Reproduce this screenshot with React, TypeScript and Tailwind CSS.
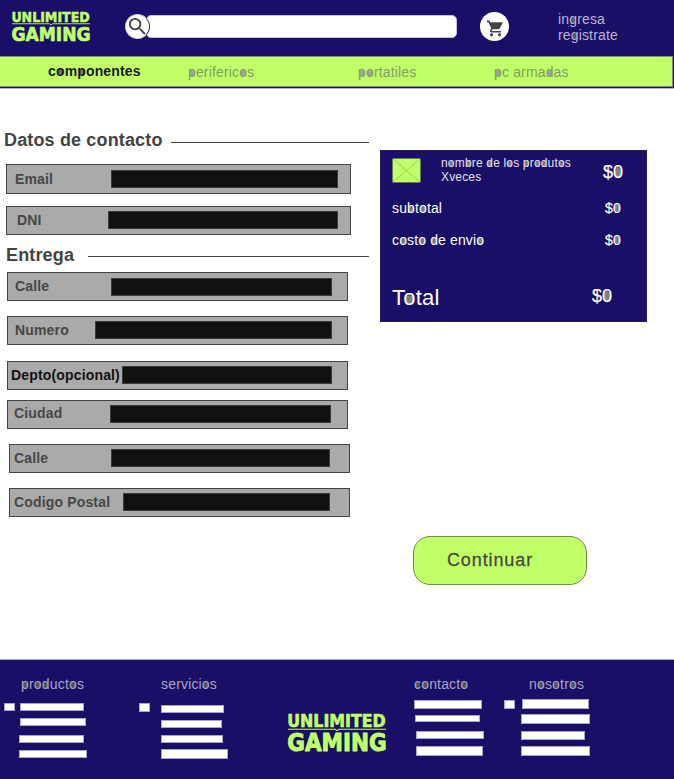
import React from "react";

/* Letters wrapped in [ ] get a softly filled counter. */
function Ink({ text, fill }: { text: string; fill: string }) {
  return (
    <>
      {text.split(/(\[[a-z0]\])/).map((part, i) =>
        part.startsWith("[") ? (
          <span key={i} className={fill}>{part[1]}</span>
        ) : (
          part
        )
      )}
    </>
  );
}

const DARK = "bg-[radial-gradient(ellipse_2.4px_3.4px_at_50%_57%,#555_75%,transparent_100%)]";
const GREY = "bg-[radial-gradient(ellipse_2.4px_3.4px_at_50%_57%,#777_75%,transparent_100%)]";
const PALE = "bg-[radial-gradient(ellipse_2.4px_3.4px_at_50%_57%,#a3a3a3_75%,transparent_100%)]";
const ZERO = "bg-[radial-gradient(ellipse_2px_4px_at_50%_50%,#808080_80%,transparent_100%)]";
const ZERO_BIG = "bg-[radial-gradient(ellipse_2.8px_5.5px_at_50%_50%,#808080_80%,transparent_100%)]";
const BIG = "bg-[radial-gradient(ellipse_4px_5px_at_50%_60%,#808080_85%,transparent_100%)]";

function Logo({ className }: { className: string }) {
  return (
    <svg viewBox="0 0 98 40" preserveAspectRatio="none" className={`overflow-visible ${className}`} fill="#c1ff68" stroke="#c1ff68">
      <g fontFamily="'DejaVu Sans Condensed', 'DejaVu Sans', sans-serif" fontWeight="700" strokeLinejoin="round">
        <text x="-0.8" y="14.7" fontSize="18.4" strokeWidth="0.6" textLength="98.5" lengthAdjust="spacingAndGlyphs">UNLIMITED</text>
        <text x="-0.8" y="38.7" fontSize="25.2" strokeWidth="0.9" textLength="99.5" lengthAdjust="spacingAndGlyphs">GAMING</text>
      </g>
      <path d="M0 17.200H47L49 18.600L51 17.200H98" fill="none" strokeWidth="1.1" />
    </svg>
  );
}

const contact = [
  { label: "Email", row: "mt-[13px] ml-[6px] w-[345px] h-[30px]", text: "mt-[6px] pl-[8px] w-[104px] text-[#474747]", box: "mt-[5px] w-[227px]" },
  { label: "DNI", row: "mt-[12px] ml-[6px] w-[345px] h-[29px]", text: "mt-[5px] pl-[10px] w-[101px] text-[#474747]", box: "mt-[4px] w-[230px]" },
];

const delivery = [
  { label: "Calle", row: "mt-[6px] ml-[7px] w-[341px] h-[29px]", text: "mt-[5px] pl-[7px] w-[103px] text-[#474747]", box: "mt-[5px] w-[221px]" },
  { label: "Numero", row: "mt-[15px] ml-[7px] w-[341px] h-[29px]", text: "mt-[5px] pl-[7px] w-[87px] text-[#474747]", box: "mt-[4px] w-[237px]" },
  { label: "Depto(opcional)", row: "mt-[16px] ml-[7px] w-[341px] h-[29px]", text: "mt-[5px] pl-[3px] w-[114px] text-[#111]", box: "mt-[4px] w-[210px]" },
  { label: "Ciudad", row: "mt-[10px] ml-[7px] w-[341px] h-[29px]", text: "mt-[4px] pl-[6px] w-[102px] text-[#474747]", box: "mt-[4px] w-[221px]" },
  { label: "Calle", row: "mt-[15px] ml-[9px] w-[341px] h-[29px]", text: "mt-[5px] pl-[4px] w-[101px] text-[#474747]", box: "mt-[4px] w-[219px]" },
  { label: "Codigo Postal", row: "mt-[15px] ml-[9px] w-[341px] h-[29px]", text: "mt-[5px] pl-[4px] w-[113px] text-[#474747]", box: "mt-[4px] w-[207px]" },
];

function Field({ label, row, text, box }: { label: string; row: string; text: string; box: string }) {
  return (
    <div className={`flex items-start border border-[#444] bg-[#aaa] ${row}`}>
      <span className={`shrink-0 whitespace-nowrap text-[14px] leading-4 font-bold tracking-[0.16px] ${text}`}>{label}</span>
      <div className={`h-[18px] shrink-0 border border-[#3c3c3c] bg-[#111] ${box}`} />
    </div>
  );
}

const BAR = "shrink-0 border border-[#a9a4cc] bg-white";

function Bars({ items }: { items: string[] }) {
  return (
    <div className="flex flex-col items-start">
      {items.map((c, i) => (
        <div key={i} className={`${BAR} ${c}`} />
      ))}
    </div>
  );
}

const TITLE = "whitespace-nowrap text-[14px] leading-4 tracking-[0.17px] text-[#a9a4c8]";

export default function App() {
  return (
    <div className="flex h-[779px] w-[674px] flex-col overflow-hidden bg-white font-['Liberation_Sans',Arial,sans-serif]">
      <header className="flex h-[56px] shrink-0 items-start bg-[#190f66]">
        <Logo className="mt-[10px] ml-[12px] h-[32px] w-[78px] shrink-0" />
        <div className="relative z-10 mt-[14px] ml-[35px] flex size-[25px] shrink-0 items-center justify-center rounded-full border border-[#c9c7da] border-r-[#333] bg-white">
          <svg viewBox="0 0 24 24" className="size-[23px] shrink-0" fill="#444">
            <path d="M15.5 14h-.79l-.28-.27A6.471 6.471 0 0 0 16 9.5 6.500 6.500 0 1 0 9.500 16c1.610 0 3.090-.59 4.230-1.570l.27.280v.790l5 4.990L20.490 19l-4.990-5zm-6 0C7.010 14 5 11.990 5 9.500S7.010 5 9.500 5 14 7.010 14 9.500 11.990 14 9.500 14z" />
          </svg>
        </div>
        <div className="mt-[15px] -ml-[4px] h-[23px] w-[311px] shrink-0 rounded-[5px] border border-[#c3bfdf] bg-white" />
        <div className="mt-[12px] ml-[23px] flex size-[29px] shrink-0 items-center justify-center rounded-full bg-white">
          <svg viewBox="0 0 24 24" className="mt-[3px] ml-[1px] size-[19px]" fill="#444">
            <path d="M7 18c-1.100 0-1.990.9-1.990 2S5.900 22 7 22s2-.9 2-2-.9-2-2-2zM1 2v2h2l3.600 7.590-1.350 2.450c-.16.280-.25.610-.25.960 0 1.100.9 2 2 2h12v-2H7.420c-.14 0-.25-.11-.25-.25l.030-.120.900-1.630h7.450c.75 0 1.410-.41 1.750-1.030l3.580-6.490A1.003 1.003 0 0 0 20 4H5.210l-.94-2H1zm16 16c-1.100 0-1.990.9-1.990 2s.89 2 1.990 2 2-.9 2-2-.9-2-2-2z" />
          </svg>
        </div>
        <div className="mt-[11px] ml-[49px] text-[14px] leading-4 tracking-[0.15px] text-[#b9b5d2]">
          <p><Ink text="in[g]resa" fill={DARK} /></p>
          <p><Ink text="re[g]istrate" fill={DARK} /></p>
        </div>
      </header>

      <nav className="flex h-[33px] shrink-0 border-b border-[#b5b1d6] bg-[#190f66] pr-px pb-px text-[14px] leading-4 whitespace-nowrap">
        <div className="flex w-[673px] items-start border-t border-r border-b border-[#7e936d] bg-[#c1ff68] text-[#7f9d62]">
          <span className="mt-[6px] w-[188px] shrink-0 pl-[48px] font-bold tracking-[0.15px] text-[#171717]"><Ink text="c[o]m[p]onentes" fill={GREY} /></span>
          <span className="mt-[7px] w-[170px] shrink-0 tracking-[0.15px]"><Ink text="[p]eriferic[o]s" fill={PALE} /></span>
          <span className="mt-[7px] w-[136px] shrink-0 tracking-[0.15px]"><Ink text="[p][o]rtatiles" fill={PALE} /></span>
          <span className="mt-[7px] tracking-[0.15px]"><Ink text="[p]c arma[d]as" fill={PALE} /></span>
        </div>
      </nav>

      <main className="flex h-[570px] shrink-0">
        <form className="w-[380px] shrink-0">
          <div className="mt-[41px] flex h-[21px] items-start pl-[4px] text-[18px] leading-[21px] font-bold tracking-[0.15px] whitespace-nowrap text-[#444]">
            <h2 className="w-[167px] shrink-0">Datos de contacto</h2>
            <div className="mt-[12px] h-px w-[198px] bg-[#444]" />
          </div>
          {contact.map((f, i) => <Field key={i} {...f} />)}
          <div className="mt-[10px] flex h-[21px] items-start pl-[6px] text-[18px] leading-[21px] font-bold tracking-[0.15px] whitespace-nowrap text-[#444]">
            <h2 className="w-[82px] shrink-0">Entrega</h2>
            <div className="mt-[11px] h-px w-[281px] bg-[#444]" />
          </div>
          {delivery.map((f, i) => <Field key={i} {...f} />)}
        </form>

        <aside className="mt-[61px] w-[267px] shrink-0">
          <section className="h-[172px] border border-[#241b68] bg-[#190f66] text-white">
            <div className="flex h-[38px] items-start border-b border-[#1e1567] pl-[11px]">
              <svg viewBox="0 0 29 25" className="mt-[7px] h-[25px] w-[29px] shrink-0">
                <rect x="0.5" y="0.5" width="28" height="24" rx="1" fill="#c1ff68" stroke="#657c58" />
                <path d="M1 1L28 24M28 1L1 24" stroke="#87a861" strokeWidth="0.6" />
              </svg>
              <div className="mt-[5px] ml-[20px] w-[162px] text-[12px] leading-[14px] tracking-[0.17px] whitespace-nowrap text-[#e4e2ee]">
                <p><Ink text="n[o]m[b]re [d]e l[o]s [p]r[o][d]ut[o]s" fill={GREY} /></p>
                <p>Xveces</p>
              </div>
              <span className="mt-[11px] text-[18px] leading-[21px] [-webkit-text-stroke:0.25px_white]"><Ink text="$[0]" fill={ZERO_BIG} /></span>
            </div>
            <div className="mt-[11px] flex pl-[11px] text-[14px] leading-4 tracking-[0.13px]">
              <span className="w-[213px]"><Ink text="su[b]t[o]tal" fill={GREY} /></span>
              <span className="[-webkit-text-stroke:0.2px_white]"><Ink text="$[0]" fill={ZERO} /></span>
            </div>
            <div className="mt-[16px] flex h-[39px] border-b border-[#1e1567] pl-[11px] text-[14px] leading-4 tracking-[0.13px]">
              <span className="w-[213px]"><Ink text="c[o]st[o] [d]e envi[o]" fill={GREY} /></span>
              <span className="[-webkit-text-stroke:0.2px_white]"><Ink text="$[0]" fill={ZERO} /></span>
            </div>
            <div className="mt-[15px] flex items-start pl-[11px]">
              <span className="w-[200px] text-[22px] leading-[24px] tracking-[0.2px]"><Ink text="T[o]tal" fill={BIG} /></span>
              <span className="text-[18px] leading-[21px] [-webkit-text-stroke:0.25px_white]"><Ink text="$[0]" fill={ZERO_BIG} /></span>
            </div>
          </section>
          <button type="button" className="mt-[214px] ml-[33px] block h-[49px] w-[174px] rounded-[17px] border border-[#718d4d] bg-[#c1ff68] pr-[20px] text-[18px] leading-[21px] tracking-[0.9px] text-[#474b40] [-webkit-text-stroke:0.3px_#474b40]">
            Continuar
          </button>
        </aside>
      </main>

      <footer className="flex h-[120px] shrink-0 items-start border-t border-[#a9a4cc] bg-[#190f66] pt-[16px]">
        <section className="w-[139px] shrink-0">
          <h3 className={`pl-[21px] ${TITLE}`}><Ink text="[p]r[o][d]uct[o]s" fill={DARK} /></h3>
          <div className="mt-[11px] flex items-start pl-[4px]">
            <div className={`${BAR} mr-[4px] h-[8px] w-[11px]`} />
            <Bars items={["ml-px h-[8px] w-[64px]", "mt-[7px] ml-px h-[8px] w-[66px]", "mt-[9px] h-[8px] w-[65px]", "mt-[7px] h-[8px] w-[68px]"]} />
          </div>
        </section>
        <section className="w-[149px] shrink-0">
          <h3 className={`pl-[22px] ${TITLE}`}><Ink text="servici[o]s" fill={DARK} /></h3>
          <div className="mt-[11px] flex items-start">
            <div className={`${BAR} mr-[11px] h-[9px] w-[11px]`} />
            <Bars items={["mt-[2px] h-[8px] w-[63px]", "mt-[7px] h-[8px] w-[61px]", "mt-[7px] h-[8px] w-[62px]", "mt-[6px] h-[10px] w-[67px]"]} />
          </div>
        </section>
        <Logo className="mt-[36px] h-[40px] w-[98px] shrink-0" />
        <section className="ml-[28px] w-[90px] shrink-0">
          <h3 className={TITLE}><Ink text="[c][o]ntact[o]" fill={DARK} /></h3>
          <div className="mt-[8px]">
            <Bars items={["h-[9px] w-[68px]", "mt-[6px] ml-px h-[7px] w-[65px]", "mt-[9px] ml-[2px] h-[8px] w-[68px]", "mt-[7px] ml-[2px] h-[10px] w-[67px]"]} />
          </div>
        </section>
        <section>
          <h3 className={`pl-[25px] ${TITLE}`}><Ink text="n[o]s[o]tr[o]s" fill={DARK} /></h3>
          <div className="mt-[7px] flex items-start">
            <div className={`${BAR} mt-px mr-[6px] h-[9px] w-[11px]`} />
            <Bars items={["ml-px h-[10px] w-[67px]", "mt-[5px] h-[10px] w-[69px]", "mt-[7px] h-[9px] w-[64px]", "mt-[6px] h-[10px] w-[69px]"]} />
          </div>
        </section>
      </footer>
    </div>
  );
}
